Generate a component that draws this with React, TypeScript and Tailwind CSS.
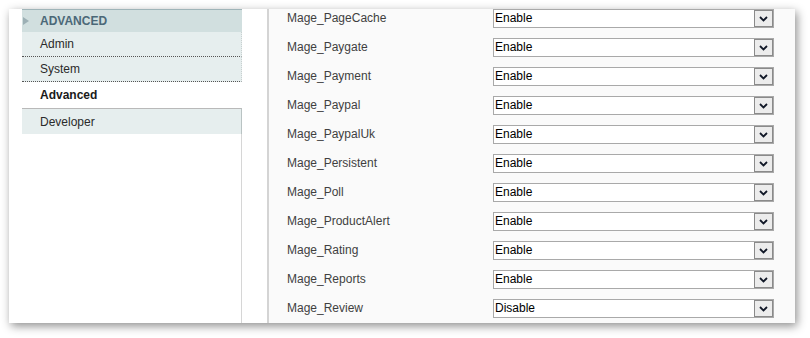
const modules: { name: string; value: string }[] = [
  { name: 'Mage_PageCache', value: 'Enable' },
  { name: 'Mage_Paygate', value: 'Enable' },
  { name: 'Mage_Payment', value: 'Enable' },
  { name: 'Mage_Paypal', value: 'Enable' },
  { name: 'Mage_PaypalUk', value: 'Enable' },
  { name: 'Mage_Persistent', value: 'Enable' },
  { name: 'Mage_Poll', value: 'Enable' },
  { name: 'Mage_ProductAlert', value: 'Enable' },
  { name: 'Mage_Rating', value: 'Enable' },
  { name: 'Mage_Reports', value: 'Enable' },
  { name: 'Mage_Review', value: 'Disable' },
];

const SelectBox = ({ value }: { value: string }) => (
  <div className="flex h-[19px] w-[281px] items-stretch border border-[#a9a9a9] bg-white">
    <div className="flex-1 pl-[1px] text-[12px] leading-[17px] text-black">{value}</div>
    <div className="flex w-[19px] items-center justify-center border border-[#8a8a8a] bg-[#ececec]">
      <svg width="9" height="6" viewBox="0 0 9 6">
        <path d="M1 1 L4.5 4.5 L8 1" fill="none" stroke="#111827" strokeWidth="1.8" />
      </svg>
    </div>
  </div>
);

export default function App() {
  return (
    <div className="h-[338px] w-[810px] overflow-hidden bg-white pl-[9px] pt-[9px] font-['Liberation_Sans',Arial,sans-serif]">
      <div className="flex h-[314px] w-[786px] bg-white shadow-[2px_3px_9px_rgba(0,0,0,0.45)]">
        <div className="flex w-[258px] flex-col pl-[13px]">
          <div className="flex h-full w-[220px] flex-col">
            <div className="flex h-[23px] items-center border-t border-[#9fb4b8] bg-[#d1dfdf] pl-[1px]">
              <svg width="6" height="8" viewBox="0 0 6 8" className="mr-[11px]">
                <path d="M0 0 L6 4 L0 8 Z" fill="#9db0b5" />
              </svg>
              <span className="text-[12px] font-bold text-[#4b6878]">ADVANCED</span>
            </div>
            <div className="flex h-[25px] items-center border-b border-r border-dotted border-b-[#555] border-r-[#c8d0d0] bg-[#e6eeee] pl-[18px] text-[12px] text-[#2a2a2a]">
              Admin
            </div>
            <div className="flex h-[25px] items-center border-b border-r border-dotted border-b-[#555] border-r-[#c8d0d0] bg-[#e6eeee] pl-[18px] text-[12px] text-[#2a2a2a]">
              System
            </div>
            <div className="flex h-[26px] items-center bg-white pl-[18px] text-[12px] font-bold text-[#1a1a1a]">
              Advanced
            </div>
            <div className="flex h-[26px] items-center border-t border-r border-t-[#b9b9b9] border-r-[#b9c3c3] bg-[#e6eeee] pl-[18px] text-[12px] text-[#2a2a2a]">
              Developer
            </div>
            <div className="flex-1 border-r border-[#d6d6d6]" />
          </div>
        </div>
        <div className="flex flex-1 flex-col overflow-hidden border-l-2 border-[#d4d4d4] bg-[#fafafa] pl-[18px]">
          {modules.map((m) => (
            <div key={m.name} className="flex h-[29px] shrink-0 items-start">
              <div className="w-[206px] pt-[1px] text-[12px] leading-[17px] text-[#3f3f3f]">{m.name}</div>
              <SelectBox value={m.value} />
            </div>
          ))}
        </div>
      </div>
    </div>
  );
}
